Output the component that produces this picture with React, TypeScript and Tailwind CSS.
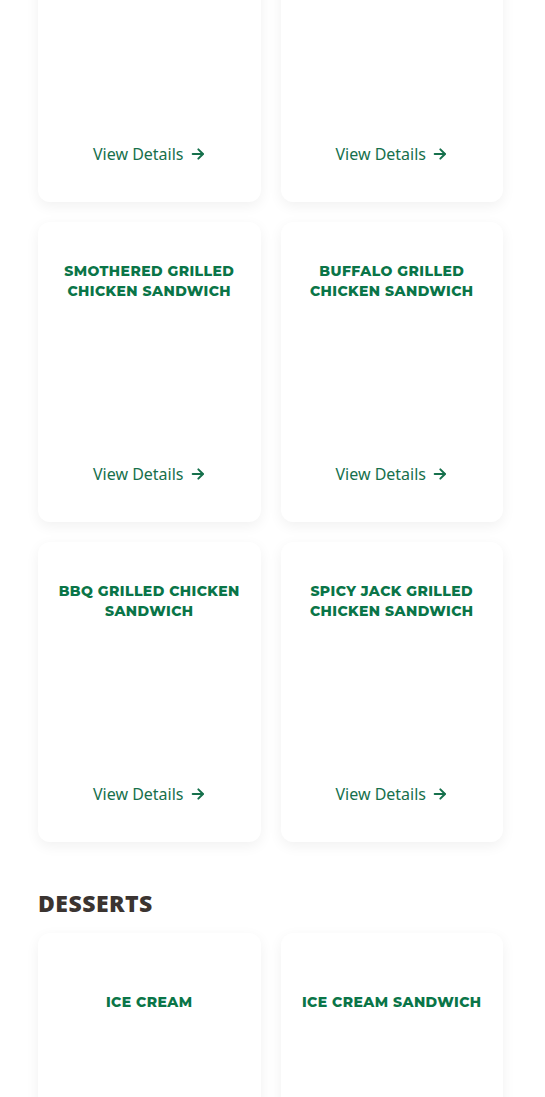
const sandwiches = [
  "Grilled Chicken Sandwich",
  "Classic Grilled Chicken Sandwich",
  "Smothered Grilled Chicken Sandwich",
  "Buffalo Grilled Chicken Sandwich",
  "BBQ Grilled Chicken Sandwich",
  "Spicy Jack Grilled Chicken Sandwich",
];

const desserts = ["Ice Cream", "Ice Cream Sandwich"];

function ArrowRight() {
  return (
    <svg width="16" height="16" viewBox="0 0 24 24" fill="none" stroke="currentColor" strokeWidth="3" strokeLinecap="round" strokeLinejoin="round">
      <path d="M4 12h15" />
      <path d="M12.5 5l7 7-7 7" />
    </svg>
  );
}

function MenuCard({ title }: { title: string }) {
  return (
    <div className="h-[300px] bg-white rounded-xl shadow-[0_4px_14px_rgba(0,0,0,0.06)] flex flex-col items-center px-3">
      <div className="h-[79px] flex items-end justify-center">
        <h3
          className="text-center uppercase text-[14px] leading-[20px] font-extrabold tracking-[0.03em] text-[#0a7548]"
          style={{ fontFamily: "Montserrat, 'Noto Sans', sans-serif" }}
        >
          {title}
        </h3>
      </div>
      <div className="flex-1" />
      <a
        href="#"
        className="flex items-center gap-[6px] text-[16px] leading-[24px] text-[#16704c] mb-[36px]"
        style={{ fontFamily: "'Noto Sans', sans-serif" }}
      >
        View Details <ArrowRight />
      </a>
    </div>
  );
}

export default function App() {
  return (
    <div className="w-[545px] h-[1097px] overflow-hidden bg-white">
      <div className="pl-[38px] pr-[42px] -mt-[98px]">
        <div className="grid grid-cols-2 gap-5">
          {sandwiches.map((s) => (
            <MenuCard key={s} title={s} />
          ))}
        </div>

        <h2
          className="mt-[47px] mb-[16px] text-[23px] leading-[28px] font-black uppercase tracking-[0.02em] text-[#3b3431]"
          style={{ fontFamily: "'Noto Sans', sans-serif" }}
        >
          Desserts
        </h2>

        <div className="grid grid-cols-2 gap-5">
          {desserts.map((d) => (
            <MenuCard key={d} title={d} />
          ))}
        </div>
      </div>
    </div>
  );
}
